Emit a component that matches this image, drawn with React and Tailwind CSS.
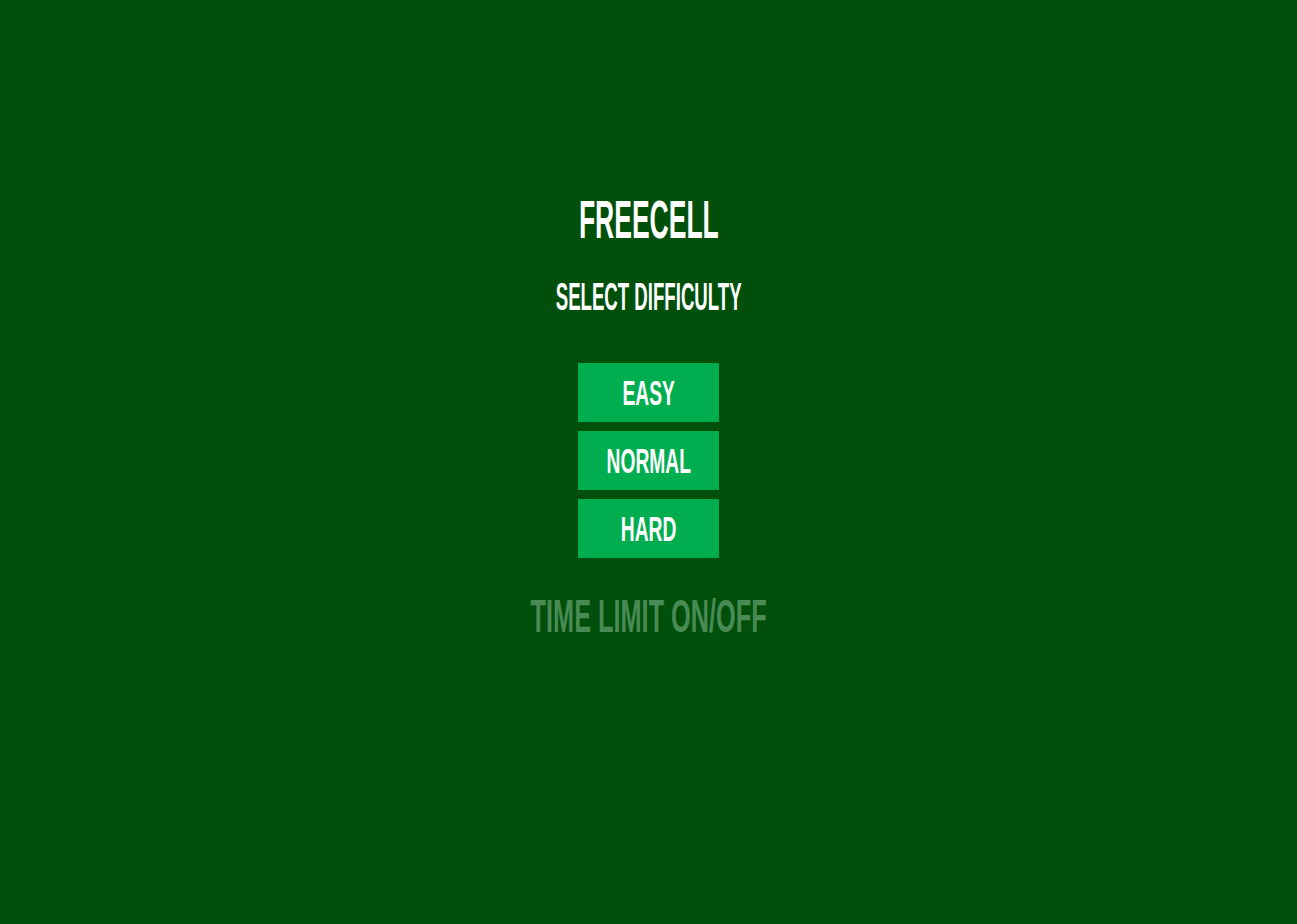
const font = { fontFamily: '"Liberation Sans Narrow", "Liberation Sans", sans-serif' };

const levels = ['Easy', 'Normal', 'Hard'];

export default function App() {
    return (
        <div className="min-h-screen w-full bg-[#00500b] flex flex-col items-center pt-[193px] uppercase font-bold" style={font}>
            <h1 className="text-[53px] leading-none text-white scale-x-[0.5]">FreeCell</h1>
            <h2 className="mt-[32px] text-[38px] leading-none text-white scale-x-[0.49]">Select Difficulty</h2>
            <div className="mt-[47px] flex flex-col gap-[9px]">
                {levels.map((l) => (
                    <button key={l} className="w-[141px] h-[59px] bg-[#00ae50] text-white flex items-center justify-center uppercase font-bold">
                        <span className="text-[35px] leading-none scale-x-[0.55]">{l}</span>
                    </button>
                ))}
            </div>
            <button className="mt-[35px] text-[46px] leading-none text-[#4a8a54] uppercase font-bold scale-x-[0.55]">Time Limit On/Off</button>
        </div>
    );
}
